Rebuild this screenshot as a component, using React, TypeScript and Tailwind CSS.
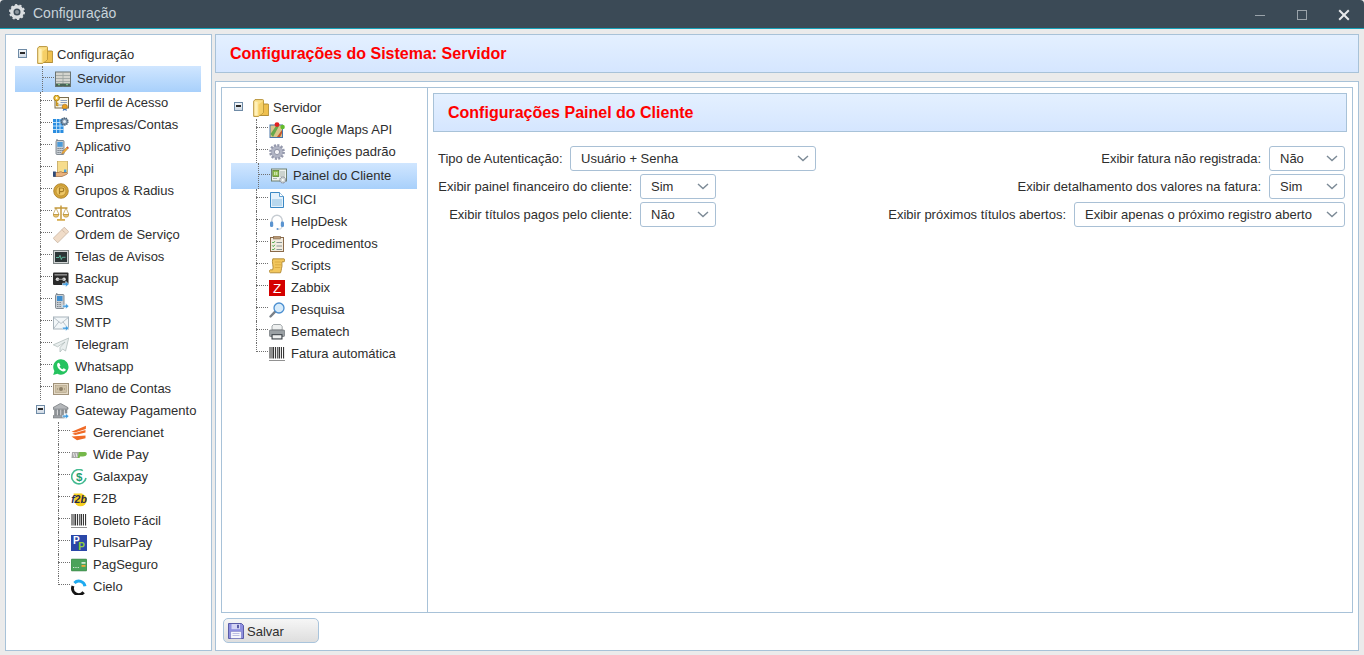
import React from "react";

const S = ({ children, className = "" }: { children: React.ReactNode; className?: string }) => (
  <svg viewBox="0 0 16 16" width="16" height="16" className={`shrink-0 ${className}`}>{children}</svg>
);
const Arrow = () => (
  <path d="M9.5 12.2h3.2v-1.9l3.2 2.9-3.2 2.8v-1.8H9.5z" fill="#3d9be0" stroke="#fff" strokeWidth=".5" />
);

const Folder = () => (
  <svg viewBox="0 0 16 18" width="16" height="18" className="shrink-0">
    <path d="M5 5h9.6c.7 0 1.1.4 1.1 1.1v10.4H5z" fill="#efc04e" stroke="#a8842c" strokeWidth=".9" />
    <path d="M.7 2.2 2 .6h7.6c.6 0 .9.3.9 1V13.5L5.5 17.4H.7z" fill="#fbe08a" stroke="#b08a2c" strokeWidth=".9" />
    <path d="M5.5 5.5v11.6L10.2 13.5V2z" fill="#f5cf66" />
    <path d="M1.6 2.5v14h3V3z" fill="#fff0b8" />
  </svg>
);
const Server = () => (
  <S>
    <rect x=".5" y="1" width="15" height="14.5" fill="#d4d4ce" stroke="#6a7472" />
    <path d="M8 1v14.5M1 4.5h14M1 7.5h14M1 10.5h14" stroke="#9aa2a0" strokeWidth=".8" />
    <path d="M1 12.5h14v2.6H1z" fill="#4a6558" />
    <path d="M3 13.7h2M11 13.7h2" stroke="#8fd08f" />
  </S>
);
const Perfil = () => (
  <S>
    <rect x="2" y="2.5" width="13.5" height="10.5" fill="#fbf7e8" stroke="#7a6c4c" />
    <path d="M7.5 5.5h6.5M7.5 7.5h6.5M4 10h6" stroke="#7f96ba" strokeWidth=".9" />
    <circle cx="3.6" cy="3" r="2.8" fill="#f4c542" stroke="#a67c10" strokeWidth=".9" />
    <circle cx="3.6" cy="3" r=".9" fill="#fff" />
    <path d="M3.6 5.5v5.5M3.6 8.5h1.8M3.6 10.5h1.8" stroke="#c8951c" strokeWidth="1.3" />
    <circle cx="11.8" cy="11.8" r="2.6" fill="#e8a020" stroke="#a66a10" strokeWidth=".6" />
    <path d="m10.3 13.8-.6 2.2 2.1-.9 2.1.9-.6-2.2" fill="#3f76c0" />
  </S>
);
const Empresas = () => (
  <S>
    <rect x="0" y="2" width="10.5" height="14" fill="#2a8de0" />
    <path d="M0 5.5h10.5M0 9h10.5M0 12.5h10.5M3.5 2v14M7 2v14" stroke="#c6e6fc" strokeWidth=".9" />
    <circle cx="11.5" cy="4.5" r="3.4" fill="#8197ad" stroke="#4a6278" strokeWidth="1.6" strokeDasharray="1.3 .8" />
    <circle cx="11.5" cy="4.5" r="1.5" fill="#e6eef4" />
  </S>
);
const Aplicativo = () => (
  <S>
    <path d="M4 0v2" stroke="#6a747c" />
    <rect x="3" y="1.5" width="8" height="14" rx="1" fill="#c8ced4" stroke="#6a747c" strokeWidth=".8" />
    <rect x="4.3" y="3" width="5.4" height="4.8" fill="#4b9ad8" />
    <path d="M4.6 9.5h1M6.6 9.5h1M8.6 9.5h1M4.6 11.5h1M6.6 11.5h1M8.6 11.5h1M4.6 13.5h1M6.6 13.5h1" stroke="#59636a" strokeWidth="1.1" />
    <path d="m9.3 13 4.9-5.2 1.3 1.2-4.9 5.2-1.9.6z" fill="#f2b33d" stroke="#a8671c" strokeWidth=".5" />
    <path d="m13.5 8.5 1-1 1.2 1.2-1 1z" fill="#d8473a" />
  </S>
);
const Api = () => (
  <S>
    <rect x="4.5" y="0" width="10" height="11.5" fill="#f6dc8c" stroke="#b89a50" strokeWidth=".7" />
    <rect x="11" y="8.5" width="2.4" height="3.8" fill="#4aa3e0" />
    <path d="M1 11.5h4.5c1.5-1 3-1 4 0h4c1.2 0 1.4 1.5 0 2l-4.5 2H1z" fill="#e9b27c" stroke="#8e5a30" strokeWidth=".6" />
    <rect y="10.5" width="2.8" height="5.3" fill="#2e4a78" />
  </S>
);
const Grupos = () => (
  <S>
    <circle cx="8" cy="8" r="7.3" fill="#d6a53a" stroke="#a67c24" strokeWidth=".8" />
    <circle cx="8" cy="8" r="5" fill="#eec766" stroke="#b78d30" strokeWidth=".8" />
    <path d="M6.5 11.2V5h2.5a1.8 1.8 0 0 1 0 3.6H6.5" fill="none" stroke="#a67c24" strokeWidth="1.2" />
  </S>
);
const Contratos = () => (
  <S>
    <path d="M8 .5V14M1.5 3h13" stroke="#c69a3c" strokeWidth="1.5" />
    <path d="M4 15.8h8v-1.8H4z" fill="#d8ad50" />
    <path d="M0 9.5 3 3l3 6.5zM10 9.5 13 3l3 6.5z" fill="none" stroke="#b8923c" strokeWidth=".7" />
    <path d="M.2 9.5h5.6a2.8 2.8 0 0 1-5.6 0zM10.2 9.5h5.6a2.8 2.8 0 0 1-5.6 0z" fill="#eac46c" stroke="#a67c24" strokeWidth=".5" />
  </S>
);
const Ordem = () => (
  <S>
    <path d="M11.3.2 15.8 4.7 4.7 15.8.2 11.3z" fill="#f0dcc8" stroke="#c0ab98" strokeWidth=".7" />
    <path d="m9 2.8 4.2 4.2" stroke="#b39a84" strokeWidth=".8" strokeDasharray="1 1" />
  </S>
);
const Telas = () => (
  <S>
    <rect x=".5" y="1.5" width="15" height="13" fill="#d0d3d3" stroke="#7c8484" />
    <rect x="2" y="3" width="12" height="10" fill="#2c3637" />
    <path d="M3 8.5h3l1-2.2 1.3 4.2 1-2.2h3.2" fill="none" stroke="#65d0b0" strokeWidth=".8" />
  </S>
);
const Backup = () => (
  <S>
    <rect y="1.5" width="15.5" height="12.5" rx="1" fill="#2a2a2a" />
    <rect x="1.5" y="3" width="12.5" height="1.6" fill="#888" />
    <circle cx="4.5" cy="8.3" r="1.8" fill="#d8d8d8" />
    <circle cx="11" cy="8.3" r="1.8" fill="#d8d8d8" />
    <path d="M4.5 8.3h6.5" stroke="#999" />
    <Arrow />
  </S>
);
const Sms = () => (
  <S>
    <path d="M3.8 0v2" stroke="#6a747c" />
    <rect x="2.5" y="1.5" width="8.5" height="14" rx="1" fill="#c8ced4" stroke="#6a747c" strokeWidth=".8" />
    <rect x="4" y="3" width="5.5" height="5" fill="#3f8fd0" />
    <path d="M4.3 9.5h1M6.6 9.5h1M4.3 11.5h1M6.6 11.5h1M4.3 13.5h1M6.6 13.5h1" stroke="#59636a" strokeWidth="1.1" />
    <Arrow />
  </S>
);
const Smtp = () => (
  <S>
    <rect x=".5" y="2" width="15" height="12" fill="#f2f6f8" stroke="#a8b4bc" />
    <path d="m.7 2.5 7.3 6 7.3-6M.7 13.5l5.2-6.7M15 13.5 10 6.8" fill="none" stroke="#a8b4bc" strokeWidth=".8" />
    <Arrow />
  </S>
);
const Telegram = () => (
  <S>
    <path d="M15.7 1 .3 7.8l4.3 2L12 5 7 10.5v4.5l2.6-3 3 2z" fill="#e9eeee" stroke="#a9b6b4" strokeWidth=".7" strokeLinejoin="round" />
  </S>
);
const Whatsapp = () => (
  <S>
    <path d="M8 .2a7.7 7.7 0 0 0-6.6 11.7L.2 15.9l4.2-1.1A7.7 7.7 0 1 0 8 .2z" fill="#25c35f" />
    <path d="M5.6 3.7c-.5 0-1.5.8-1.5 2.4 0 2.9 3.5 6.3 6.3 6.3 1.7 0 2.4-1.2 2.4-1.7 0-.4-2-1.5-2.3-1.4-.3.1-.7 1-1 1-.7 0-2.8-1.9-2.9-2.7 0-.4.8-.7.8-1.1 0-.3-.8-2.8-1.8-2.8z" fill="#fff" />
  </S>
);
const Plano = () => (
  <S>
    <rect x=".5" y="2.5" width="15" height="11" fill="#e5dac6" stroke="#a0927a" />
    <rect x="2.5" y="4.5" width="11" height="7" fill="#cfc2a8" stroke="#a8997e" strokeWidth=".5" />
    <circle cx="8" cy="8" r="2" fill="#8d8067" />
    <path d="M4 8h1M11 8h1" stroke="#8d8067" />
  </S>
);
const Gateway = () => (
  <S>
    <path d="M7.5.4 15 4.6v1.6H0V4.6z" fill="#b4b7ba" stroke="#6c7074" strokeWidth=".7" />
    <path d="M1.5 6.8h2.2v5.4H1.5zM5 6.8h2.2v5.4H5zM8.5 6.8h2.2v5.4H8.5zM12 6.8h2v3.5h-2z" fill="#8f9498" stroke="#62666a" strokeWidth=".4" />
    <path d="M0 12.6h11.5v2.4H0z" fill="#9ea2a6" stroke="#62666a" strokeWidth=".5" />
    <Arrow />
  </S>
);
const Gerencianet = () => (
  <S>
    <path d="M15 .8 .5 6.8l3.4.8L14.8 4zM14.5 5 1.2 8.8l3 1.1 10.3-2.3zM.5 11.5l5.5 3.8 8.5-2V10.5z" fill="#f06a26" />
  </S>
);
const WidePay = () => (
  <S>
    <path d="M1 5h8.5L8 11H.5z" fill="#a8a8a8" />
    <path d="M9.5 5H14a2 2 0 0 1 1.8 2.2C15.3 9 14 9.4 12 9.4H9l-.5 1.6H6.5L8 5z" fill="#75b84a" />
    <path d="m2.5 6 1 4M5 6l1 4" stroke="#fff" strokeWidth=".8" />
  </S>
);
const Galaxpay = () => (
  <S>
    <path d="M11.8 1.6A7.2 7.2 0 1 0 15 9" fill="none" stroke="#45bb92" strokeWidth="1.6" />
    <text x="8.2" y="12.2" textAnchor="middle" fontSize="11.5" fontWeight="700" fill="#1f9e70" fontFamily="Liberation Sans">$</text>
  </S>
);
const F2b = () => (
  <S>
    <circle cx="9.5" cy="9" r="6.3" fill="#f6cf1e" />
    <path d="M2.5 2.5h9L10 5H3z" fill="#f6cf1e" />
    <text x="8" y="12.4" textAnchor="middle" fontSize="10.5" fontWeight="700" fontStyle="italic" fill="#2a2a4a" fontFamily="Liberation Sans">f2b</text>
  </S>
);
const Barcode = () => (
  <S>
    <path d="M1 1v11.5M3 1v11.5M4.6 1v11.5M6.6 1v11.5M8.8 1v11.5M10.4 1v11.5M12.4 1v11.5M14.6 1v11.5" stroke="#222" strokeWidth="1" />
    <path d="M.5 14.5h15" stroke="#222" strokeWidth="1" strokeDasharray="1 1" />
  </S>
);
const Pulsar = () => (
  <S>
    <rect width="16" height="16" fill="#2b47a8" />
    <text x="5.4" y="9" textAnchor="middle" fontSize="10" fontWeight="700" fill="#fff" fontFamily="Liberation Sans">P</text>
    <text x="10.6" y="15.4" textAnchor="middle" fontSize="10" fontWeight="700" fill="#8fd03c" fontFamily="Liberation Sans">P</text>
  </S>
);
const PagSeguro = () => (
  <S>
    <rect y="2" width="16" height="12" rx="1" fill="#4ba35a" stroke="#3a7f47" strokeWidth=".5" />
    <rect x="10.5" y="5" width="4" height="1.8" fill="#cfe8d2" />
    <rect x="10.5" y="8" width="4" height="1.8" fill="#f0a93c" />
    <path d="M2 10.5h6" stroke="#cfe8d2" strokeDasharray="1 .7" />
  </S>
);
const Cielo = () => (
  <S>
    <path d="M3.4 4a6.2 6.2 0 0 1 10.6 3.2" fill="none" stroke="#1eaaf0" strokeWidth="3" />
    <path d="M2 7a6.2 6.2 0 0 0 10.6 6.2" fill="none" stroke="#151515" strokeWidth="3" />
  </S>
);
const Maps = () => (
  <S>
    <rect x="1" y="3" width="12.5" height="12.5" fill="#d9c48a" stroke="#4a76a8" />
    <path d="M1.5 12 7 4h3L4 15z" fill="#67a84a" />
    <path d="M8 15 13 8v3l-2 4z" fill="#c9552a" />
    <circle cx="8" cy="2.6" r="2.4" fill="#e02020" />
    <circle cx="13.6" cy="5" r="2.2" fill="#62bc2c" />
  </S>
);
const Gear = () => (
  <S>
    <circle cx="8" cy="8" r="6.4" fill="#b4b8c6" stroke="#9498ac" strokeWidth="3" strokeDasharray="2 1.3" />
    <circle cx="8" cy="8" r="5.4" fill="#b0b4c4" />
    <circle cx="8" cy="8" r="2.6" fill="#f4f4f8" stroke="#777b90" strokeWidth=".7" />
  </S>
);
const Painel = () => (
  <S>
    <rect x=".5" y="1" width="15" height="12" fill="#eef2ee" stroke="#6f806f" />
    <rect x="1.8" y="2.5" width="6" height="6" fill="#8fbf4a" stroke="#4f7a28" strokeWidth=".7" />
    <path d="M3.8 4v3M5.8 4v3" stroke="#fff" strokeWidth=".8" />
    <path d="M9 4h5M9 6h5M9 8h5M2 10.5h4" stroke="#98a4a0" strokeWidth=".8" />
    <circle cx="11.8" cy="12" r="3" fill="#cfd6d6" stroke="#667" strokeWidth=".8" strokeDasharray="1.2 .5" />
    <circle cx="11.8" cy="12" r="1" fill="#fff" />
  </S>
);
const Sici = () => (
  <S>
    <path d="M1.5.5h9l4 4v11h-13z" fill="#e4f1fb" stroke="#3a88c4" />
    <path d="M10.5.5v4h4" fill="#fff" stroke="#3a88c4" strokeWidth=".8" />
    <path d="M3 7h10v7H3z" fill="#b8d8ee" />
  </S>
);
const Helpdesk = () => (
  <S>
    <path d="M2.8 9V6.5a5.2 5.2 0 0 1 10.4 0V9" fill="none" stroke="#c6ccd2" strokeWidth="1.4" />
    <rect x="1" y="7.5" width="3.2" height="5.6" rx="1.4" fill="#5b94d0" />
    <rect x="11.8" y="7.5" width="3.2" height="5.6" rx="1.4" fill="#5b94d0" />
    <path d="M13 13c0 1.7-2 2.2-4 2.2" fill="none" stroke="#c6ccd2" />
    <circle cx="8.5" cy="15" r="1" fill="#5b94d0" />
  </S>
);
const Procedimentos = () => (
  <S>
    <rect x="1.5" y="1.5" width="13" height="14" fill="#f2ece0" stroke="#8a6a4a" />
    <rect x="4.5" y="0" width="7" height="3" fill="#b89a78" stroke="#75583c" strokeWidth=".5" />
    <path d="m3.3 6 1 1 1.5-1.7M3.3 9.5l1 1 1.5-1.7M3.3 13l1 1 1.5-1.7" fill="none" stroke="#35a035" strokeWidth="1" />
    <path d="M7.5 6.5h5.5M7.5 10H13M7.5 13.5H13" stroke="#7d8a8a" strokeWidth=".9" />
  </S>
);
const Scripts = () => (
  <S>
    <path d="M3.8.8H15c1 .3 1 2 .1 3H13c-.3 2 .5 4-.5 6.5-.3 1.7-.2 3-1 4.5H1.4C0 14.5 0 12.3 1.3 11.8h2.4C5 8.5 2.4 4.5 3.8.8z" fill="#f2c75e" stroke="#a67c24" strokeWidth=".8" />
    <path d="M5.8 4h6M6 6.8h6M5.8 9.5h5.5" stroke="#d6a43e" strokeWidth=".8" />
  </S>
);
const Zabbix = () => (
  <S>
    <rect width="16" height="16" fill="#d40000" />
    <text x="8" y="13" textAnchor="middle" fontSize="13.5" fill="#fff" fontFamily="Liberation Sans">Z</text>
  </S>
);
const Pesquisa = () => (
  <S>
    <path d="m1.5 14.5 4.4-4.6" stroke="#7a8088" strokeWidth="2.4" strokeLinecap="round" />
    <circle cx="10" cy="6" r="5" fill="#d6ebfb" stroke="#4a8ed0" strokeWidth="1.3" />
  </S>
);
const Bematech = () => (
  <S>
    <path d="M4.5.5h7l1.7 2V6H3V2z" fill="#eef0f0" stroke="#7c8488" strokeWidth=".7" />
    <rect x=".4" y="6" width="15.2" height="6.5" rx="1" fill="#9aa0a4" stroke="#5a6064" strokeWidth=".6" />
    <rect x="2.5" y="10.2" width="11" height="5.3" fill="#3a4046" />
    <rect x="3.6" y="11.2" width="8.8" height="3.2" fill="#eef0f0" />
  </S>
);
const Floppy = () => (
  <S>
    <path d="M.5.5h13l2 2v13H.5z" fill="#8e8fe0" stroke="#5a5ca8" />
    <rect x="3.5" y="1" width="8.5" height="5.2" fill="#d4d4f4" />
    <rect x="9" y="1.8" width="2" height="3.4" fill="#5a5ca8" />
    <rect x="2.8" y="8.5" width="10.4" height="6.8" fill="#f6f6fc" stroke="#7c7ec0" strokeWidth=".5" />
    <path d="M4.5 10.5h7M4.5 12.5h7" stroke="#a4a6d8" strokeWidth=".7" />
  </S>
);

const dots = "border-[#707070] border-dotted";

function Expander() {
  return (
    <span className="flex h-[9px] w-[9px] shrink-0 items-center justify-center border border-[#6f8ba6] bg-[linear-gradient(#f4f7fa,#cfd9e4)]">
      <span className="h-[2px] w-[5px] bg-[#2a2a2a]" />
    </span>
  );
}

function Connector({ last }: { last?: boolean }) {
  return (
    <span className="relative h-full w-[13px] shrink-0">
      <span className={`absolute left-0 top-0 border-l ${dots} ${last ? "h-[9px]" : "h-full"}`} />
      <span className={`absolute left-0 top-[8px] h-0 w-[12px] border-t ${dots}`} />
    </span>
  );
}

function Row({ icon, label, last, deep }: { icon: React.ReactNode; label: string; last?: boolean; deep?: boolean }) {
  return (
    <div className={`flex h-[22px] shrink-0 items-center ${deep ? "pl-[43px]" : "pl-[25px]"}`}>
      <Connector last={last} />
      <span className="mr-[6px]">{icon}</span>
      <span>{label}</span>
    </div>
  );
}

function Selected({ icon, label }: { icon: React.ReactNode; label: string }) {
  return (
    <div className="flex h-[26px] w-[186px] shrink-0 items-center bg-[linear-gradient(#d0e6ff,#a8d0fb)] pl-[27px]">
      <span className="relative h-full w-[13px] shrink-0">
        <span className={`absolute left-0 top-0 h-full border-l ${dots}`} />
        <span className={`absolute left-0 top-[11px] h-0 w-[12px] border-t ${dots}`} />
      </span>
      <span className="mr-[6px]">{icon}</span>
      <span>{label}</span>
    </div>
  );
}

function RootRow({ icon, label }: { icon: React.ReactNode; label: string }) {
  return (
    <div className="flex h-[22px] shrink-0 items-center pl-[3px]">
      <span className="-translate-y-[2px]"><Expander /></span>
      <span className="ml-[10px] mr-[4px]">{icon}</span>
      <span>{label}</span>
    </div>
  );
}

function Select({ value, className }: { value: string; className: string }) {
  return (
    <div className={`flex h-[25px] shrink-0 items-center justify-between rounded-[3px] border border-[#a9c0d5] bg-white pl-[10px] pr-[6px] ${className}`}>
      <span>{value}</span>
      <svg width="12" height="7" viewBox="0 0 12 7" className="shrink-0">
        <path d="m1 1 5 4.6L11 1" fill="none" stroke="#7c8a96" strokeWidth="1.4" />
      </svg>
    </div>
  );
}

const mainItems: [React.ReactNode, string][] = [
  [<Perfil />, "Perfil de Acesso"],
  [<Empresas />, "Empresas/Contas"],
  [<Aplicativo />, "Aplicativo"],
  [<Api />, "Api"],
  [<Grupos />, "Grupos & Radius"],
  [<Contratos />, "Contratos"],
  [<Ordem />, "Ordem de Serviço"],
  [<Telas />, "Telas de Avisos"],
  [<Backup />, "Backup"],
  [<Sms />, "SMS"],
  [<Smtp />, "SMTP"],
  [<Telegram />, "Telegram"],
  [<Whatsapp />, "Whatsapp"],
  [<Plano />, "Plano de Contas"],
];
const gatewayItems: [React.ReactNode, string][] = [
  [<Gerencianet />, "Gerencianet"],
  [<WidePay />, "Wide Pay"],
  [<Galaxpay />, "Galaxpay"],
  [<F2b />, "F2B"],
  [<Barcode />, "Boleto Fácil"],
  [<Pulsar />, "PulsarPay"],
  [<PagSeguro />, "PagSeguro"],
  [<Cielo />, "Cielo"],
];
const serverBefore: [React.ReactNode, string][] = [
  [<Maps />, "Google Maps API"],
  [<Gear />, "Definições padrão"],
];
const serverAfter: [React.ReactNode, string][] = [
  [<Sici />, "SICI"],
  [<Helpdesk />, "HelpDesk"],
  [<Procedimentos />, "Procedimentos"],
  [<Scripts />, "Scripts"],
  [<Zabbix />, "Zabbix"],
  [<Pesquisa />, "Pesquisa"],
  [<Bematech />, "Bematech"],
  [<Barcode />, "Fatura automática"],
];

const banner = "flex h-[39px] shrink-0 items-center border border-[#a8c2d8] bg-[linear-gradient(#e4f0ff,#d5e6ff)] pl-[14px] text-base font-bold text-[#ff0000]";

export default function App() {
  return (
    <div className="flex h-[655px] w-[1364px] flex-col overflow-hidden bg-[#ebebeb] font-['Liberation_Sans',Arial,sans-serif] text-[13px] text-[#2e2e2e]">
      <header className="flex h-[29px] shrink-0 items-center rounded-t-[4px] border-b border-[#17a2b8] bg-[#3b4a56] pl-[9px]">
        <svg viewBox="0 0 16 16" width="16" height="16" className="mb-[4px]">
          <circle cx="8" cy="8" r="5.2" fill="none" stroke="#d9dde0" strokeWidth="3.4" />
          <circle cx="8" cy="8" r="7" fill="none" stroke="#d9dde0" strokeWidth="2" strokeDasharray="2.2 2.2" />
          <circle cx="8" cy="8" r="2" fill="#8a949c" />
        </svg>
        <span className="mb-[3px] ml-2 text-sm text-[#c8d3da]">Configuração</span>
        <div className="ml-auto mt-[2px] flex items-center">
          <span className="h-px w-[10px] bg-[#9aa3aa]" />
          <span className="ml-[32px] h-[10px] w-[10px] border border-[#9aa3aa]" />
          <svg width="12" height="12" viewBox="0 0 12 12" className="ml-[31px] mr-[14px]">
            <path d="m1.2 1.2 9.6 9.6M10.8 1.2l-9.6 9.6" stroke="#e8eaec" strokeWidth="2" />
          </svg>
        </div>
      </header>

      <div className="flex min-h-0 flex-1 gap-[3px] pb-[4px] pl-[5px] pr-[5px] pt-[5px]">
        <aside className="flex w-[207px] shrink-0 flex-col border border-[#a8c2d8] bg-white pl-[9px] pt-[9px]">
          <RootRow icon={<Folder />} label="Configuração" />
          <Selected icon={<Server />} label="Servidor" />
          {mainItems.map(([icon, label]) => (
            <Row key={label} icon={icon} label={label} />
          ))}
          <div className="flex h-[22px] shrink-0 items-center pl-[21px]">
            <span className="-translate-y-[2px]"><Expander /></span>
            <span className="ml-[8px] mr-[6px]">
              <Gateway />
            </span>
            <span>Gateway Pagamento</span>
          </div>
          {gatewayItems.map(([icon, label], i) => (
            <Row key={label} icon={icon} label={label} deep last={i === gatewayItems.length - 1} />
          ))}
        </aside>

        <main className="flex min-w-0 flex-1 flex-col gap-[8px]">
          <div className={banner}>Configurações do Sistema: Servidor</div>
          <div className="flex min-h-0 flex-1 flex-col border border-[#a8c2d8] bg-white p-[5px]">
            <div className="flex min-h-0 flex-1 border border-[#a8c2d8]">
              <div className="flex w-[206px] shrink-0 flex-col border-r border-[#a8c2d8] pl-[9px] pt-[9px]">
                <RootRow icon={<Folder />} label="Servidor" />
                {serverBefore.map(([icon, label]) => (
                  <Row key={label} icon={icon} label={label} />
                ))}
                <Selected icon={<Painel />} label="Painel do Cliente" />
                {serverAfter.map(([icon, label], i) => (
                  <Row key={label} icon={icon} label={label} last={i === serverAfter.length - 1} />
                ))}
              </div>
              <div className="min-w-0 flex-1 p-[5px]">
                <div className={banner}>Configurações Painel do Cliente</div>
                <div className="ml-[5px] mr-[2px] mt-[14px] flex justify-between">
                  <div className="flex w-[378px] flex-col gap-[3px]">
                    <div className="flex items-center justify-between">
                      <span>Tipo de Autenticação:</span>
                      <Select value="Usuário + Senha" className="w-[246px]" />
                    </div>
                    <div className="mr-[100px] flex items-center justify-end gap-2">
                      <span>Exibir painel financeiro do cliente:</span>
                      <Select value="Sim" className="w-[76px]" />
                    </div>
                    <div className="mr-[100px] flex items-center justify-end gap-2">
                      <span>Exibir títulos pagos pelo cliente:</span>
                      <Select value="Não" className="w-[76px]" />
                    </div>
                  </div>
                  <div className="flex flex-col items-end gap-[3px]">
                    <div className="flex items-center gap-2">
                      <span>Exibir fatura não registrada:</span>
                      <Select value="Não" className="w-[76px]" />
                    </div>
                    <div className="flex items-center gap-2">
                      <span>Exibir detalhamento dos valores na fatura:</span>
                      <Select value="Sim" className="w-[76px]" />
                    </div>
                    <div className="flex items-center gap-2">
                      <span>Exibir próximos títulos abertos:</span>
                      <Select value="Exibir apenas o próximo registro aberto" className="w-[271px]" />
                    </div>
                  </div>
                </div>
              </div>
            </div>
            <div className="flex h-[32px] shrink-0 items-end pb-[2px] pl-[2px]">
              <button className="flex h-[25px] w-[96px] items-center rounded-[5px] border border-[#a9c4dc] bg-[linear-gradient(#f6f6f6,#dedede)] pl-[4px] text-[#2e2e2e]">
                <Floppy />
                <span className="ml-[3px] translate-y-px">Salvar</span>
              </button>
            </div>
          </div>
        </main>
      </div>
    </div>
  );
}
